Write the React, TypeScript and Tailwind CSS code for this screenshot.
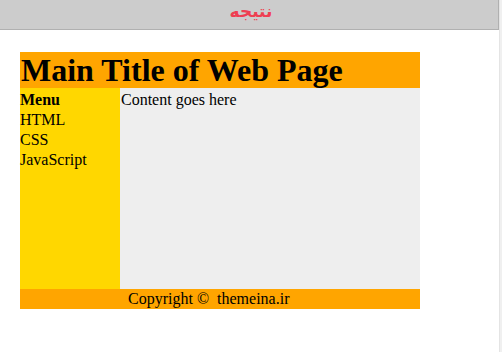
export default function App() {
  return (
    <div className="flex w-[502px] h-[352px] bg-white overflow-hidden">
      <div className="w-[499px] flex flex-col">
        <div className="h-[30px] bg-[#cccccc] border-b border-r border-[#b0b0b0] flex items-center justify-center">
          <span
            dir="rtl"
            className="text-[17px] font-bold text-[#ee3f52] leading-none -mt-[7px] ml-[4px]"
            style={{ fontFamily: '"DejaVu Sans", sans-serif' }}
          >
            نتیجه
          </span>
        </div>

        <div
          className="ml-[20px] mt-[22px] w-[400px] text-black"
          style={{ fontFamily: '"Liberation Serif", serif' }}
        >
          <div className="h-[36px] bg-[#ffa500]">
            <h1 className="text-[32px] font-bold leading-[36px] pl-[1px]">Main Title of Web Page</h1>
          </div>

          <div className="flex h-[201px]">
            <div className="w-[100px] bg-[#ffd700] text-[16px] leading-[20px] pt-[2px]">
              <div className="font-bold">Menu</div>
              <div>HTML</div>
              <div>CSS</div>
              <div>JavaScript</div>
            </div>
            <div className="flex-1 bg-[#eeeeee] text-[16px] leading-[20px] pt-[2px] pl-[1px]">
              Content goes here
            </div>
          </div>

          <div className="h-[20px] bg-[#ffa500] text-[16px] leading-[20px] pl-[108px] whitespace-pre">
            {'Copyright ©  themeina.ir'}
          </div>
        </div>
      </div>
      <div className="flex-1 bg-[#f0f0f0] border-l border-[#e4e4e4]" />
    </div>
  );
}
